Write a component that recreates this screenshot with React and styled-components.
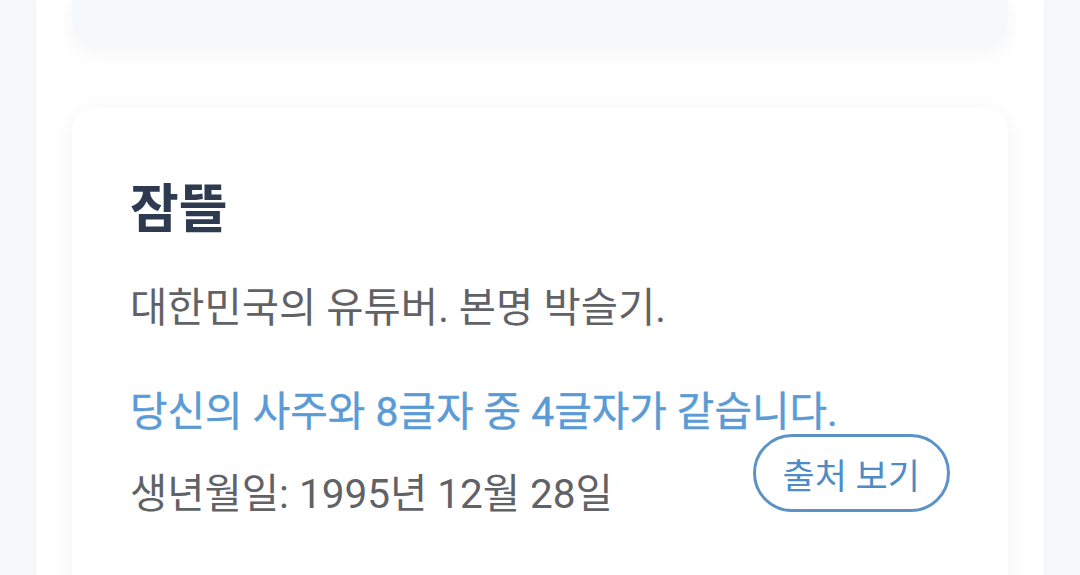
import React from 'react';
import styled, { createGlobalStyle } from 'styled-components';

const GlobalStyle = createGlobalStyle`
  html, body {
    margin: 0;
    padding: 0;
    background: #f7f8fa;
    font-family: Roboto, "Noto Sans CJK KR", "Noto Sans", sans-serif;
  }
`;

const Page = styled.div`
  height: 575px;
  overflow: hidden;
  background: #f7f8fa;
`;

const Column = styled.main`
  width: 1008px;
  margin: 0 36px;
  min-height: 575px;
  background: #ffffff;
  padding: 0 36px;
  box-sizing: border-box;
  box-shadow: 0 0 6px rgba(0, 0, 0, 0.04);
`;

const PrevCard = styled.div`
  height: 47px;
  background: #f7f8fa;
  border-radius: 0 0 24px 24px;
  box-shadow: 0 6px 22px rgba(0, 0, 0, 0.045);
`;

const Card = styled.section`
  margin-top: 61px;
  background: #ffffff;
  border-radius: 24px;
  box-shadow: 0 4px 24px rgba(0, 0, 0, 0.05);
  padding: 70px 58px 110px;
`;

const Name = styled.h2`
  margin: 0;
  font-size: 53px;
  line-height: 64px;
  font-weight: 700;
  color: #2d3a4f;
`;

const Desc = styled.p`
  margin: 38px 0 0;
  font-size: 40.5px;
  line-height: 56px;
  color: #606266;
`;

const Match = styled.p`
  margin: 48px 0 0;
  font-size: 40.8px;
  line-height: 56px;
  font-weight: 400;
  color: #5a9bd5;
  -webkit-text-stroke: 0.4px #5a9bd5;
`;

const Footer = styled.div`
  margin-top: -6px;
  display: flex;
  justify-content: space-between;
  align-items: flex-end;
`;

const Birth = styled.p`
  margin: 0;
  font-size: 40.5px;
  line-height: 56px;
  color: #606266;
`;

const SourceButton = styled.button`
  height: 78px;
  padding: 0 27px;
  margin: 0 0 10px;
  border: 3px solid #5b93c8;
  border-radius: 39px;
  background: #ffffff;
  color: #4f8cc4;
  font-family: inherit;
  font-size: 35px;
`;

export default function App() {
  return (
    <Page>
      <GlobalStyle />
      <Column>
        <PrevCard />
        <Card>
          <Name>잠뜰</Name>
          <Desc>대한민국의 유튜버. 본명 박슬기.</Desc>
          <Match>당신의 사주와 8글자 중 4글자가 같습니다.</Match>
          <Footer>
            <Birth>생년월일: 1995년 12월 28일</Birth>
            <SourceButton>출처 보기</SourceButton>
          </Footer>
        </Card>
      </Column>
    </Page>
  );
}
